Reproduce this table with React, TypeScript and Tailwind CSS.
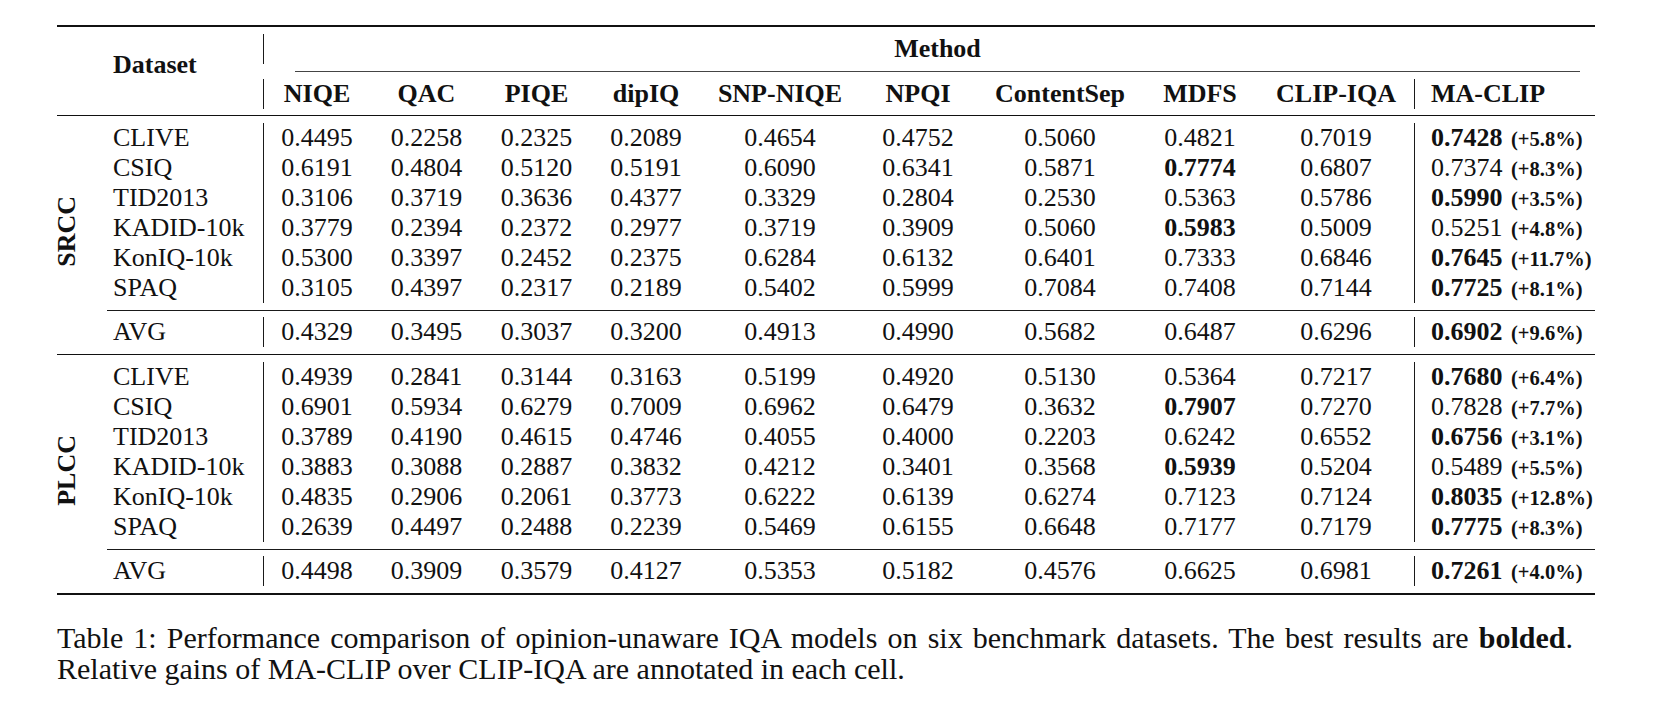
type Row = { name: string; vals: string[]; ma: string; gain: string; best: number };

const srcc: Row[] = [
  { name: "CLIVE", vals: ["0.4495", "0.2258", "0.2325", "0.2089", "0.4654", "0.4752", "0.5060", "0.4821", "0.7019"], ma: "0.7428", gain: "(+5.8%)", best: 9 },
  { name: "CSIQ", vals: ["0.6191", "0.4804", "0.5120", "0.5191", "0.6090", "0.6341", "0.5871", "0.7774", "0.6807"], ma: "0.7374", gain: "(+8.3%)", best: 7 },
  { name: "TID2013", vals: ["0.3106", "0.3719", "0.3636", "0.4377", "0.3329", "0.2804", "0.2530", "0.5363", "0.5786"], ma: "0.5990", gain: "(+3.5%)", best: 9 },
  { name: "KADID-10k", vals: ["0.3779", "0.2394", "0.2372", "0.2977", "0.3719", "0.3909", "0.5060", "0.5983", "0.5009"], ma: "0.5251", gain: "(+4.8%)", best: 7 },
  { name: "KonIQ-10k", vals: ["0.5300", "0.3397", "0.2452", "0.2375", "0.6284", "0.6132", "0.6401", "0.7333", "0.6846"], ma: "0.7645", gain: "(+11.7%)", best: 9 },
  { name: "SPAQ", vals: ["0.3105", "0.4397", "0.2317", "0.2189", "0.5402", "0.5999", "0.7084", "0.7408", "0.7144"], ma: "0.7725", gain: "(+8.1%)", best: 9 },
];
const srccAvg: Row = { name: "AVG", vals: ["0.4329", "0.3495", "0.3037", "0.3200", "0.4913", "0.4990", "0.5682", "0.6487", "0.6296"], ma: "0.6902", gain: "(+9.6%)", best: 9 };

const plcc: Row[] = [
  { name: "CLIVE", vals: ["0.4939", "0.2841", "0.3144", "0.3163", "0.5199", "0.4920", "0.5130", "0.5364", "0.7217"], ma: "0.7680", gain: "(+6.4%)", best: 9 },
  { name: "CSIQ", vals: ["0.6901", "0.5934", "0.6279", "0.7009", "0.6962", "0.6479", "0.3632", "0.7907", "0.7270"], ma: "0.7828", gain: "(+7.7%)", best: 7 },
  { name: "TID2013", vals: ["0.3789", "0.4190", "0.4615", "0.4746", "0.4055", "0.4000", "0.2203", "0.6242", "0.6552"], ma: "0.6756", gain: "(+3.1%)", best: 9 },
  { name: "KADID-10k", vals: ["0.3883", "0.3088", "0.2887", "0.3832", "0.4212", "0.3401", "0.3568", "0.5939", "0.5204"], ma: "0.5489", gain: "(+5.5%)", best: 7 },
  { name: "KonIQ-10k", vals: ["0.4835", "0.2906", "0.2061", "0.3773", "0.6222", "0.6139", "0.6274", "0.7123", "0.7124"], ma: "0.8035", gain: "(+12.8%)", best: 9 },
  { name: "SPAQ", vals: ["0.2639", "0.4497", "0.2488", "0.2239", "0.5469", "0.6155", "0.6648", "0.7177", "0.7179"], ma: "0.7775", gain: "(+8.3%)", best: 9 },
];
const plccAvg: Row = { name: "AVG", vals: ["0.4498", "0.3909", "0.3579", "0.4127", "0.5353", "0.5182", "0.4576", "0.6625", "0.6981"], ma: "0.7261", gain: "(+4.0%)", best: 9 };

// header cells, each with its own explicit column
const methods = [
  { name: "NIQE", col: "col-start-3 border-l border-[#1a1a1a]" },
  { name: "QAC", col: "col-start-4" },
  { name: "PIQE", col: "col-start-5" },
  { name: "dipIQ", col: "col-start-6" },
  { name: "SNP-NIQE", col: "col-start-7" },
  { name: "NPQI", col: "col-start-8" },
  { name: "ContentSep", col: "col-start-9" },
  { name: "MDFS", col: "col-start-10" },
  { name: "CLIP-IQA", col: "col-start-11" },
];

// column widths: label | dataset | 9 baselines | MA-CLIP
const grid =
  "grid grid-cols-[50px_156px_107px_113px_107px_112px_156px_120px_164px_116px_156px_181px]";

function Cells({ row }: { row: Row }) {
  return (
    <>
      <div className="col-start-2 h-[30px] pl-[6px] whitespace-nowrap">{row.name}</div>
      {row.vals.map((v, i) => (
        <div
          key={i}
          className={`h-[30px] text-center ${i === 0 ? "border-l border-[#1a1a1a]" : ""} ${row.best === i ? "font-bold" : ""}`}
        >
          {v}
        </div>
      ))}
      <div className="h-[30px] border-l border-[#1a1a1a] pl-[16px] whitespace-nowrap">
        <span className={row.best === 9 ? "font-bold" : ""}>{row.ma}</span>{" "}
        <span className="ml-[2px] text-[20.5px] font-bold">{row.gain}</span>
      </div>
    </>
  );
}

function Section({ label, rows, avg }: { label: string; rows: Row[]; avg: Row }) {
  return (
    <div className={`${grid} py-[7px]`}>
      <div className="col-start-1 row-start-1 row-span-8 flex items-center -translate-y-[4px]">
        <span className="-ml-[3px] font-bold leading-[26px] [writing-mode:vertical-rl] rotate-180">{label}</span>
      </div>
      {rows.map((r) => (
        <Cells key={r.name} row={r} />
      ))}
      <div className="col-start-2 col-span-11 pt-[7px] pb-[6px]">
        <div className="h-px bg-[#1a1a1a]" />
      </div>
      <Cells row={avg} />
    </div>
  );
}

export default function App() {
  return (
    <div className="min-h-screen w-full bg-white pl-[57px] pt-[25px] font-['Liberation_Serif',serif] text-[26px] leading-[30px] text-[#111]">
      <div className="w-[1538px]">
        <div className="h-[2px] bg-[#111]" />
        {/* header */}
        <div className={`${grid} pt-[7px] pb-[6px]`}>
          <div className="col-start-2 row-start-1 row-span-3 pl-[6px] pt-[16px] font-bold">Dataset</div>
          <div className="col-start-3 col-span-10 row-start-1 h-[30px] border-l border-[#1a1a1a] pl-[16px] text-center font-bold">
            Method
          </div>
          <div className="col-start-3 col-span-10 row-start-2 h-[15px] pl-[32px] pr-[15px] pt-[7px]">
            <div className="h-px bg-[#444]" />
          </div>
          {methods.map((m) => (
            <div key={m.name} className={`row-start-3 h-[30px] text-center font-bold whitespace-nowrap ${m.col}`}>
              {m.name}
            </div>
          ))}
          <div className="col-start-12 row-start-3 h-[30px] border-l border-[#1a1a1a] pl-[16px] font-bold">MA-CLIP</div>
        </div>
        <div className="h-px bg-[#111]" />
        <Section label="SRCC" rows={srcc} avg={srccAvg} />
        <div className="h-px bg-[#111]" />
        <Section label="PLCC" rows={plcc} avg={plccAvg} />
        <div className="h-[2px] bg-[#111]" />
      </div>
      {/* caption */}
      <div className="mt-[27px] w-[1516px] text-[30px] leading-[31px]">
        <p className="text-justify [text-align-last:justify]">
          Table 1: Performance comparison of opinion-unaware IQA models on six benchmark datasets. The best results are{" "}
          <span className="font-bold">bolded</span>.
        </p>
        <p>Relative gains of MA-CLIP over CLIP-IQA are annotated in each cell.</p>
      </div>
    </div>
  );
}
